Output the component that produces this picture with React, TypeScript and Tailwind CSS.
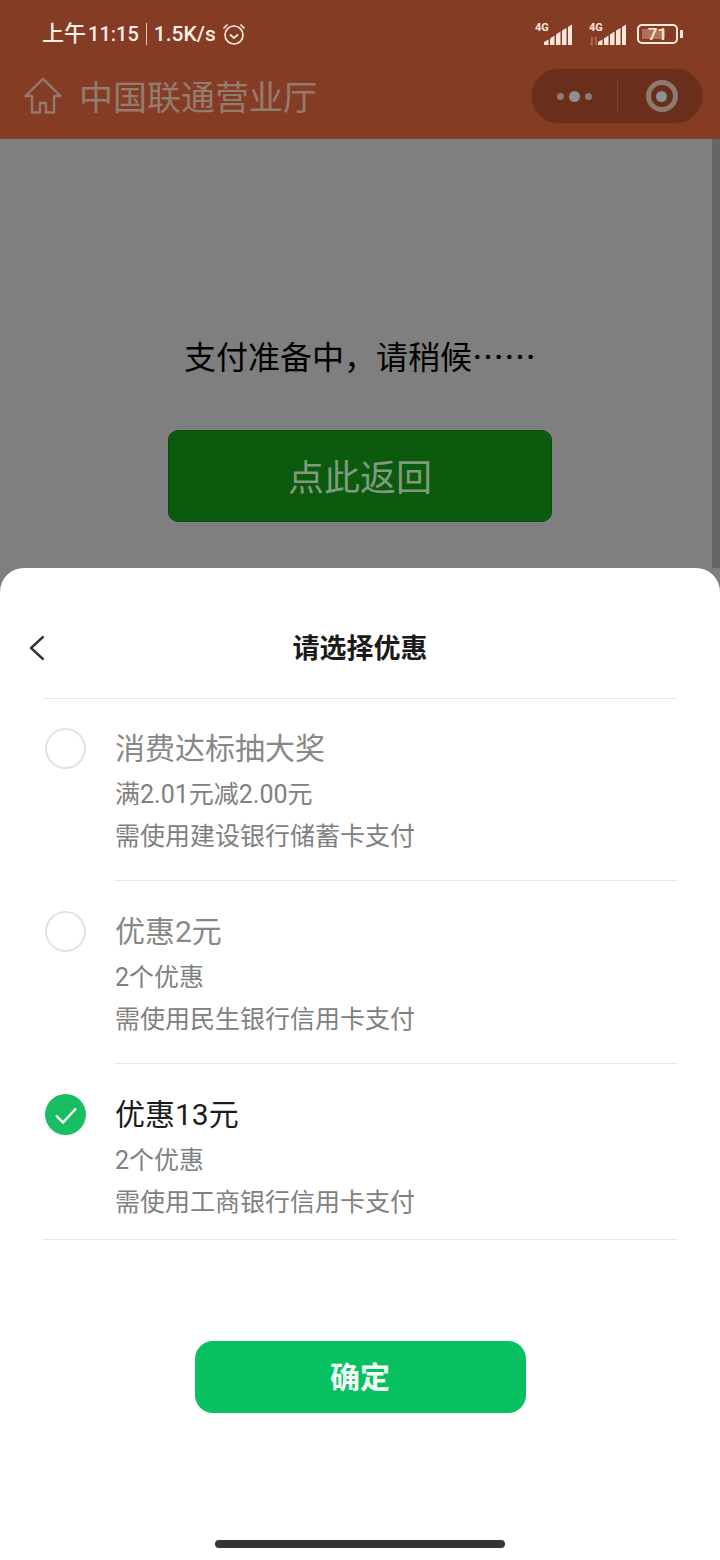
const CJK = "font-['Roboto','Noto_Sans_CJK_SC',sans-serif]";

function Signal({ arrows }: { arrows?: boolean }) {
  return (
    <svg width="37" height="24" viewBox="0 0 37 24" className="block">
      <text x="0" y="9" fontSize="11" fontWeight="700" fill="#fde8dc" fontFamily="Roboto, sans-serif">4G</text>
      {arrows && <path d="M3 15v8M1.500 21.500 3 23M7 23v-8M5.500 16.500 7 15" stroke="#c98a72" strokeWidth="1" fill="none" />}
      <path d="M9 23v-3l4.500-2.500V23zM15 23v-6.500l4.500-3V23zM21 23V12.500l4.500-3V23zM27 23V8.500l4.500-2.500V23zM33 23V5l4-2.500V23z" fill="#fde8dc" />
    </svg>
  );
}

function Row({ title, sub, note, selected, first, last }: { title: string; sub: string; note: string; selected?: boolean; first?: boolean; last?: boolean }) {
  return (
    <div className={`ml-[43px] mr-[43px] flex ${first ? "h-[182px]" : last ? "h-[176px] border-b border-[#e6e6e6]" : "h-[183px]"}`}>
      <div className={`w-[72px] shrink-0 pl-[2px] ${first ? "pt-[29px]" : "pt-[30px]"}`}>
        {selected ? (
          <div className="flex h-[41px] w-[41px] items-center justify-center rounded-full bg-[#19bd62]">
            <svg width="26" height="20" viewBox="0 0 26 20" fill="none">
              <path d="M3 10.500l7 7L23 3.500" stroke="#fff" strokeWidth="2.400" />
            </svg>
          </div>
        ) : (
          <div className="h-[41px] w-[41px] rounded-full border-2 border-[#e3e3e3]" />
        )}
      </div>
      <div className={`flex-1 ${first ? "pt-[25px]" : "pt-[26px]"} ${last ? "" : "border-b border-[#e6e6e6]"}`}>
        <div className={`text-[30px] leading-[50px] ${selected ? "text-[#1c1c1c]" : "text-[#888888]"}`}>{title}</div>
        <div className="text-[25px] leading-[42px] text-[#808080]">{sub}</div>
        <div className="text-[25px] leading-[42px] text-[#808080]">{note}</div>
      </div>
    </div>
  );
}

export default function App() {
  return (
    <div className={`relative flex h-[1560px] w-[720px] flex-col overflow-hidden bg-[#7f7f7f] ${CJK}`}>
      <header className="h-[139px] shrink-0 bg-[#843c24]">
        <div className="flex h-[68px] items-center justify-between pl-[42px] pr-[37px]">
          <div className="flex items-center text-[#fdeee6]">
            <span className="text-[22px] font-medium leading-[28px]">上午<span className="ml-[2px] text-[20px]">11:15</span></span>
            <span className="mx-[7px] h-[22px] w-px bg-[#e9c4b3]" />
            <span className="text-[21px] font-medium leading-[28px]">1.5K/s</span>
            <svg width="24" height="24" viewBox="0 0 24 24" fill="none" stroke="#fde8dc" strokeWidth="1.700" className="ml-[6px]">
              <circle cx="12" cy="13" r="9" />
              <path d="M8 12.500l4 3.500 4-3.500M1.500 6.500 5.500 2.500M22.500 6.500l-4-4" />
            </svg>
          </div>
          <div className="flex items-center">
            <Signal />
            <div className="ml-[17px]"><Signal arrows /></div>
            <div className="ml-[11px] flex items-center">
              <div className="relative flex h-[20px] w-[41px] items-center justify-center overflow-hidden rounded-[5px] border-2 border-[#fde8dc] text-[17px] font-medium leading-none text-[#fde8dc]">
                <div className="absolute inset-y-[3px] left-[3px] w-[23px] bg-[#b06f58]" />
                <span className="relative">71</span>
              </div>
              <div className="ml-[2px] h-[8px] w-[3px] rounded-r-[1px] bg-[#fde8dc]" />
            </div>
          </div>
        </div>
        <div className="flex h-[56px] items-center pl-[24px] pr-[17px]">
          <svg width="38" height="38" viewBox="0 0 38 38" fill="none" stroke="#937a6e" strokeWidth="2.400" strokeLinejoin="round">
            <path d="M1.500 19 19 1.800 36.500 19H30V35.500H22V26H16V35.500H8V19Z" />
          </svg>
          <span className="ml-[17px] mt-[3px] text-[34px] leading-[44px] text-[#947c70]">中国联通营业厅</span>
          <div className="ml-auto flex h-[56px] w-[172px] items-center rounded-full border border-[#773720] bg-[#6a2f1b]">
            <div className="flex w-[85px] items-center justify-center gap-[5px]">
              <span className="h-[7px] w-[7px] rounded-full bg-[#8d7b73]" />
              <span className="h-[11px] w-[11px] rounded-full bg-[#8b9094]" />
              <span className="h-[7px] w-[7px] rounded-full bg-[#8d7b73]" />
            </div>
            <div className="h-[32px] w-px bg-[#7d432c]" />
            <div className="flex flex-1 items-center justify-center pl-[3px]">
              <div className="flex h-[32px] w-[32px] items-center justify-center rounded-full border-[5px] border-[#8d7b73]">
                <span className="h-[11px] w-[11px] rounded-full bg-[#8b9094]" />
              </div>
            </div>
          </div>
        </div>
      </header>

      <main className="relative flex h-[429px] shrink-0 flex-col items-center">
        <div className="absolute right-0 top-0 h-full w-[8px] bg-[#666666]" />
        <p className="mt-[194px] font-['Noto_Sans_CJK_SC',sans-serif] text-[32px] leading-[44px] text-[#000000]">支付准备中，请稍候……</p>
        <div className="mt-[53px] flex h-[92px] w-[384px] items-center justify-center rounded-[10px] border border-[#0a4a0b] bg-[#0c5a0d] pt-[6px] text-[36px] text-[#7f9a7f]">
          点此返回
        </div>
      </main>

      <section className="flex flex-1 flex-col rounded-t-[24px] bg-white">
        <div className="relative flex h-[130px] items-start justify-center">
          <svg width="16" height="26" viewBox="0 0 16 26" fill="none" stroke="#333" strokeWidth="2.400" className="absolute left-[29px] top-[67px]">
            <path d="M14.500 1.500 2 13l12.500 11.500" />
          </svg>
          <h2 className="mt-[61px] text-[27px] font-bold leading-[40px] text-[#1a1a1a]">请选择优惠</h2>
        </div>
        <div className="mx-[43px] h-px bg-[#e6e6e6]" />
        <Row first title="消费达标抽大奖" sub="满2.01元减2.00元" note="需使用建设银行储蓄卡支付" />
        <Row title="优惠2元" sub="2个优惠" note="需使用民生银行信用卡支付" />
        <Row title="优惠13元" sub="2个优惠" note="需使用工商银行信用卡支付" selected last />
        <div className="mt-[101px] flex justify-center">
          <button className="h-[72px] w-[331px] rounded-[18px] bg-[#07c160] text-[30px] font-bold text-[#f4fff8]">确定</button>
        </div>
        <div className="mx-auto mt-[127px] h-[8px] w-[290px] rounded-full bg-[#333333]" />
      </section>
    </div>
  );
}
